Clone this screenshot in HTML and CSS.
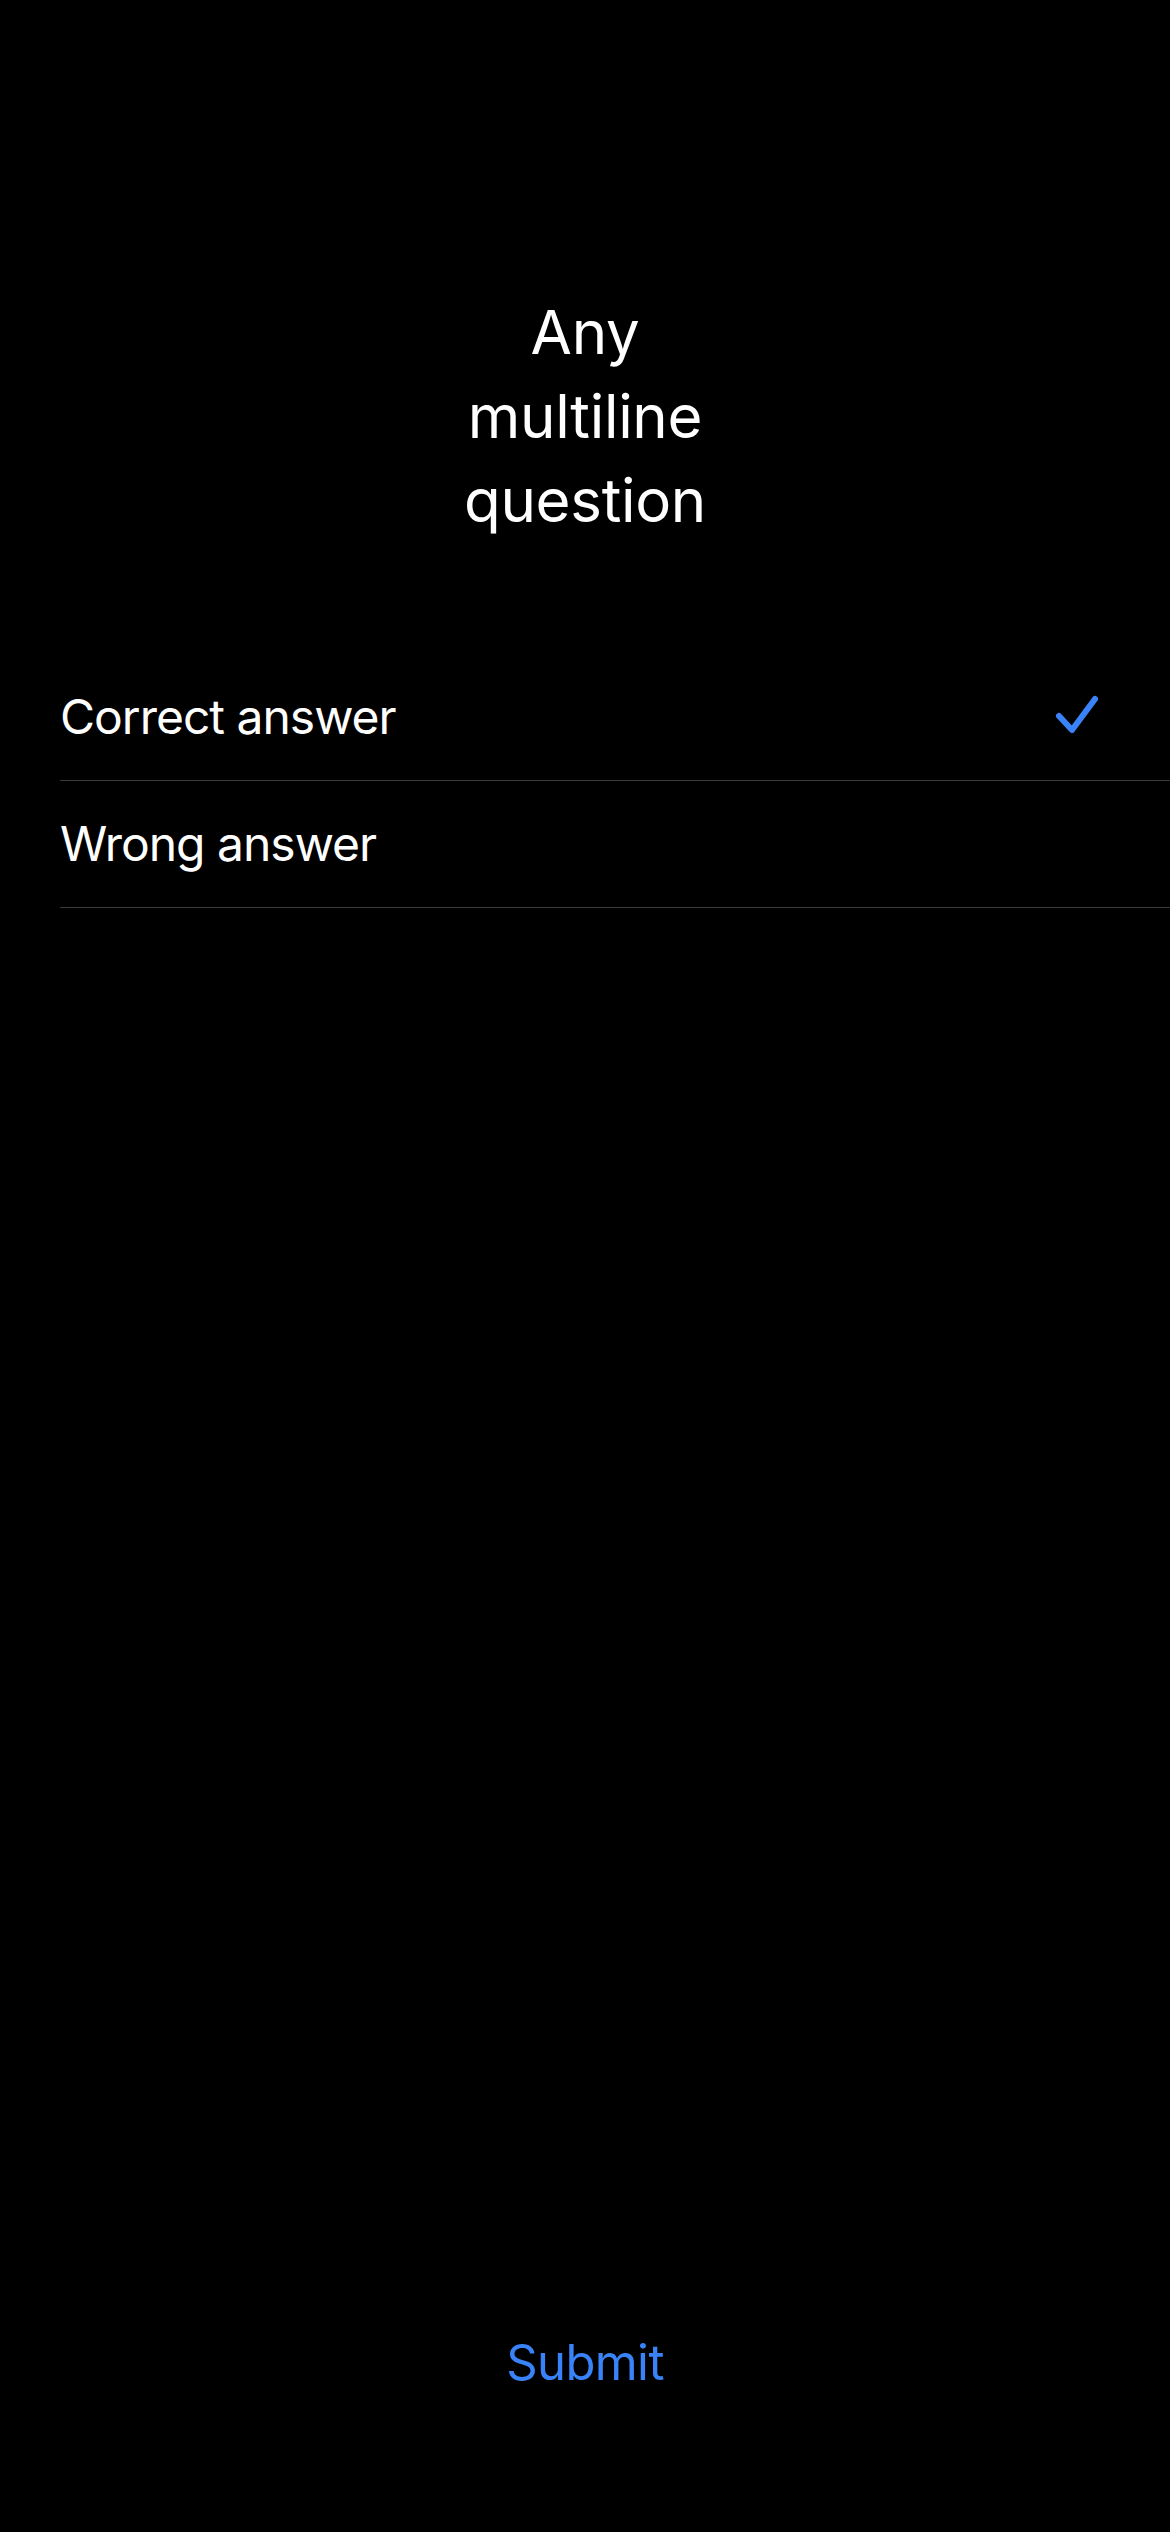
FILE: index.html
```html
<!DOCTYPE html>
<html lang="en">
<head>
<meta charset="utf-8">
<title>Question</title>
<link rel="stylesheet" href="styles.css">
</head>
<body>
<main class="screen">
  <h1 class="question">Any<br>multiline<br>question</h1>
  <ul class="answers">
    <li class="answer">
      <span class="answer-text">Correct answer</span>
      <svg class="check" width="46" height="44" viewBox="0 0 46 44" aria-hidden="true">
        <path d="M4 21 L17 35 L40 4" fill="none" stroke="#3a82f7" stroke-width="6" stroke-linecap="round" stroke-linejoin="round"/>
      </svg>
    </li>
    <li class="answer">
      <span class="answer-text">Wrong answer</span>
    </li>
  </ul>
  <div class="footer">
    <button class="submit" type="button">Submit</button>
  </div>
</main>
</body>
</html>
```

FILE: styles.css
```css
html, body {
  margin: 0;
  padding: 0;
  background: #000;
}

body {
  font-family: Inter, "Noto Sans", "Liberation Sans", sans-serif;
  color: #fff;
}

.screen {
  display: flex;
  flex-direction: column;
  min-height: 2532px;
  box-sizing: border-box;
}

.question {
  margin: 0;
  padding-top: 290px;
  text-align: center;
  font-weight: 400;
  font-size: 60px;
  line-height: 84px;
  letter-spacing: -0.3px;
}

.answers {
  list-style: none;
  margin: 112px 0 0 60px;
  padding: 0;
}

.answer {
  display: flex;
  align-items: center;
  justify-content: space-between;
  height: 126px;
  border-bottom: 1px solid #3a3a3c;
  padding-right: 69px;
}

.answer-text {
  font-size: 48px;
  line-height: 60px;
  letter-spacing: -1px;
}

.check {
  display: block;
}

.footer {
  margin-top: auto;
  display: flex;
  justify-content: center;
  padding-bottom: 139px;
}

.submit {
  background: none;
  border: 0;
  padding: 0;
  color: #3a82f7;
  font-family: inherit;
  font-size: 49px;
  line-height: 60px;
  letter-spacing: -0.6px;
}
```
